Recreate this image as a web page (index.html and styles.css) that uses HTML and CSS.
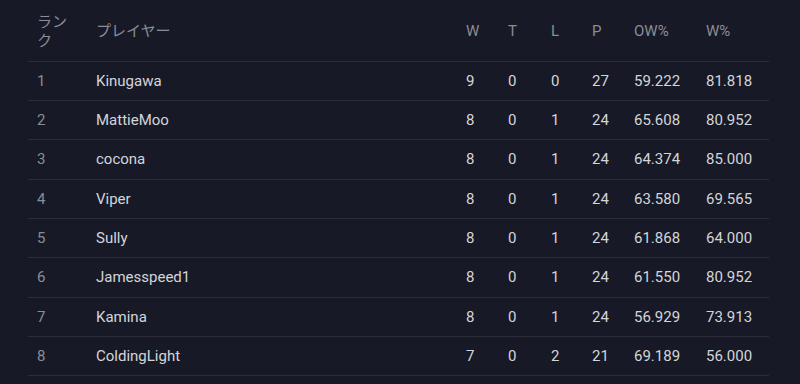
FILE: index.html
```html
<!DOCTYPE html>
<html lang="ja">
<head>
<meta charset="utf-8">
<link rel="stylesheet" href="styles.css">
</head>
<body>
<div class="wrap">
<table class="standings">
  <colgroup>
    <col class="c-rank"><col class="c-player"><col class="c-w"><col class="c-t"><col class="c-l"><col class="c-p"><col class="c-ow"><col class="c-wp">
  </colgroup>
  <thead>
    <tr><th>ランク</th><th>プレイヤー</th><th>W</th><th>T</th><th>L</th><th>P</th><th>OW%</th><th>W%</th></tr>
  </thead>
  <tbody>
    <tr><td class="rank">1</td><td>Kinugawa</td><td>9</td><td>0</td><td>0</td><td>27</td><td>59.222</td><td>81.818</td></tr>
    <tr><td class="rank">2</td><td>MattieMoo</td><td>8</td><td>0</td><td>1</td><td>24</td><td>65.608</td><td>80.952</td></tr>
    <tr><td class="rank">3</td><td>cocona</td><td>8</td><td>0</td><td>1</td><td>24</td><td>64.374</td><td>85.000</td></tr>
    <tr><td class="rank">4</td><td>Viper</td><td>8</td><td>0</td><td>1</td><td>24</td><td>63.580</td><td>69.565</td></tr>
    <tr><td class="rank">5</td><td>Sully</td><td>8</td><td>0</td><td>1</td><td>24</td><td>61.868</td><td>64.000</td></tr>
    <tr><td class="rank">6</td><td>Jamesspeed1</td><td>8</td><td>0</td><td>1</td><td>24</td><td>61.550</td><td>80.952</td></tr>
    <tr><td class="rank">7</td><td>Kamina</td><td>8</td><td>0</td><td>1</td><td>24</td><td>56.929</td><td>73.913</td></tr>
    <tr><td class="rank">8</td><td>ColdingLight</td><td>7</td><td>0</td><td>2</td><td>21</td><td>69.189</td><td>56.000</td></tr>
  </tbody>
</table>
</div>
</body>
</html>
```

FILE: styles.css
```css
html, body {
  margin: 0;
  padding: 0;
  background: #171a26;
}
body {
  font-family: Roboto, "Noto Sans CJK JP", sans-serif;
  font-size: 15px;
  color: #d3d5da;
  overflow: hidden;
}
.wrap {
  padding: 0 31px 0 28px;
}
.standings {
  width: 741px;
  table-layout: fixed;
  border-collapse: collapse;
}
.c-rank { width: 60px; }
.c-player { width: 370px; }
.c-w { width: 42px; }
.c-t { width: 43px; }
.c-l { width: 41px; }
.c-p { width: 42px; }
.c-ow { width: 72px; }
.c-wp { width: 71px; }
.standings th {
  height: 61px;
  padding: 3px 8px 0;
  text-align: left;
  font-weight: 400;
  color: #8a8d95;
  line-height: 19px;
  vertical-align: middle;
  border-bottom: 1px solid #2b2e39;
  box-sizing: border-box;
}
.standings thead th:first-child {
  padding-right: 18px;
  padding-left: 9px;
}
.standings td {
  height: 38.35px;
  padding: 0 8px;
  line-height: 18px;
  vertical-align: middle;
  border-bottom: 1px solid #2b2e39;
  white-space: nowrap;
}
.standings td.rank {
  color: #8a8d95;
  padding-left: 9px;
}
```
